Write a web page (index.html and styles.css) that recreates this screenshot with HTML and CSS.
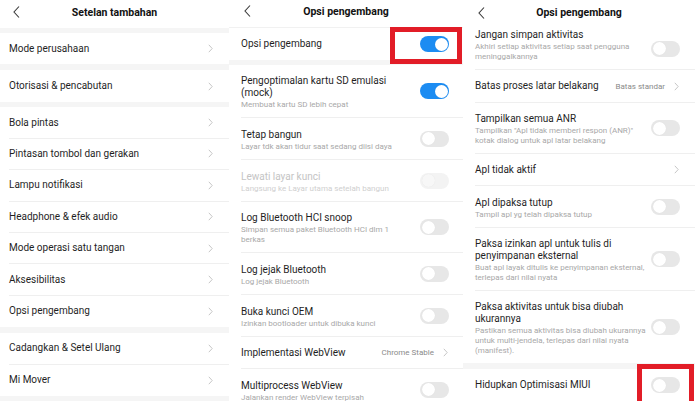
FILE: index.html
```html
<!DOCTYPE html>
<html lang="id">
<head>
<meta charset="utf-8">
<title>Opsi pengembang</title>
<link rel="stylesheet" href="styles.css">
</head>
<body>
<div class="screens">

  <section class="screen s1">
    <header class="bar">
      <svg class="back" viewBox="0 0 7 12"><polyline points="6,0.5 1,6 6,11.5"/></svg>
      <h1>Setelan tambahan</h1>
      <span></span>
    </header>
    <div class="band"></div>
    <div class="row plain last"><span class="label">Mode perusahaan</span><svg class="chev" viewBox="0 0 5 9"><polyline points="0.8,0.8 4.2,4.5 0.8,8.2"/></svg></div>
    <div class="band b6"></div>
    <div class="row plain last tall"><span class="label">Otorisasi &amp; pencabutan</span><svg class="chev" viewBox="0 0 5 9"><polyline points="0.8,0.8 4.2,4.5 0.8,8.2"/></svg></div>
    <div class="band"></div>
    <div class="row plain"><span class="label">Bola pintas</span><svg class="chev" viewBox="0 0 5 9"><polyline points="0.8,0.8 4.2,4.5 0.8,8.2"/></svg></div>
    <div class="row plain"><span class="label">Pintasan tombol dan gerakan</span><svg class="chev" viewBox="0 0 5 9"><polyline points="0.8,0.8 4.2,4.5 0.8,8.2"/></svg></div>
    <div class="row plain"><span class="label">Lampu notifikasi</span><svg class="chev" viewBox="0 0 5 9"><polyline points="0.8,0.8 4.2,4.5 0.8,8.2"/></svg></div>
    <div class="row plain"><span class="label">Headphone &amp; efek audio</span><svg class="chev" viewBox="0 0 5 9"><polyline points="0.8,0.8 4.2,4.5 0.8,8.2"/></svg></div>
    <div class="row plain"><span class="label">Mode operasi satu tangan</span><svg class="chev" viewBox="0 0 5 9"><polyline points="0.8,0.8 4.2,4.5 0.8,8.2"/></svg></div>
    <div class="row plain"><span class="label">Aksesibilitas</span><svg class="chev" viewBox="0 0 5 9"><polyline points="0.8,0.8 4.2,4.5 0.8,8.2"/></svg></div>
    <div class="row plain last"><span class="label">Opsi pengembang</span><svg class="chev" viewBox="0 0 5 9"><polyline points="0.8,0.8 4.2,4.5 0.8,8.2"/></svg></div>
    <div class="band b6"></div>
    <div class="row plain"><span class="label">Cadangkan &amp; Setel Ulang</span><svg class="chev" viewBox="0 0 5 9"><polyline points="0.8,0.8 4.2,4.5 0.8,8.2"/></svg></div>
    <div class="row plain last"><span class="label">Mi Mover</span><svg class="chev" viewBox="0 0 5 9"><polyline points="0.8,0.8 4.2,4.5 0.8,8.2"/></svg></div>
    <div class="band b6"></div>
  </section>

  <section class="screen s2">
    <header class="bar lined">
      <svg class="back" viewBox="0 0 7 12"><polyline points="6,0.5 1,6 6,11.5"/></svg>
      <h1>Opsi pengembang</h1>
      <span></span>
    </header>
    <div class="row plain last"><span class="label">Opsi pengembang</span><span class="toggle on"></span></div>
    <div class="band"></div>
    <div class="row"><div class="text"><span class="title">Pengoptimalan kartu SD emulasi<br>(mock)</span><span class="sub">Membuat kartu SD lebih cepat</span></div><span class="toggle on"></span></div>
    <div class="row"><div class="text"><span class="title">Tetap bangun</span><span class="sub">Layar tdk akan tidur saat sedang diisi daya</span></div><span class="toggle"></span></div>
    <div class="row disabled"><div class="text"><span class="title">Lewati layar kunci</span><span class="sub">Langsung ke Layar utama setelah bangun</span></div><span class="toggle"></span></div>
    <div class="row"><div class="text"><span class="title">Log Bluetooth HCI snoop</span><span class="sub">Simpan semua paket Bluetooth HCI dlm 1<br>berkas</span></div><span class="toggle"></span></div>
    <div class="row"><div class="text"><span class="title">Log jejak Bluetooth</span><span class="sub">Log jejak Bluetooth</span></div><span class="toggle"></span></div>
    <div class="row"><div class="text"><span class="title">Buka kunci OEM</span><span class="sub">Izinkan bootloader untuk dibuka kunci</span></div><span class="toggle"></span></div>
    <div class="row plain"><span class="label">Implementasi WebView</span><span class="value">Chrome Stable</span><svg class="chev" viewBox="0 0 5 9"><polyline points="0.8,0.8 4.2,4.5 0.8,8.2"/></svg></div>
    <div class="row"><div class="text"><span class="title">Multiprocess WebView</span><span class="sub">Jalankan render WebView terpisah</span></div><span class="toggle"></span></div>
    <div class="mark m2"></div>
  </section>

  <section class="screen s3">
    <header class="bar">
      <svg class="back" viewBox="0 0 7 12"><polyline points="6,0.5 1,6 6,11.5"/></svg>
      <h1>Opsi pengembang</h1>
      <span></span>
    </header>
    <div class="row cut"><div class="text"><span class="title">Jangan simpan aktivitas</span><span class="sub">Akhiri setiap aktivitas setiap saat pengguna<br>meninggalkannya</span></div><span class="toggle"></span></div>
    <div class="row plain wide"><span class="label">Batas proses latar belakang</span><span class="value">Batas standar</span><svg class="chev" viewBox="0 0 5 9"><polyline points="0.8,0.8 4.2,4.5 0.8,8.2"/></svg></div>
    <div class="row"><div class="text"><span class="title">Tampilkan semua ANR</span><span class="sub">Tampilkan "Apl tidak memberi respon (ANR)"<br>kotak dialog untuk apl latar belakang</span></div><span class="toggle"></span></div>
    <div class="row plain"><span class="label">Apl tidak aktif</span><svg class="chev" viewBox="0 0 5 9"><polyline points="0.8,0.8 4.2,4.5 0.8,8.2"/></svg></div>
    <div class="row"><div class="text"><span class="title">Apl dipaksa tutup</span><span class="sub">Tampil apl yg telah dipaksa tutup</span></div><span class="toggle"></span></div>
    <div class="row"><div class="text"><span class="title">Paksa izinkan apl untuk tulis di<br>penyimpanan eksternal</span><span class="sub">Buat apl layak ditulis ke penyimpanan eksternal,<br>terlepas dari nilai nyata</span></div><span class="toggle"></span></div>
    <div class="row last"><div class="text"><span class="title">Paksa aktivitas untuk bisa diubah<br>ukurannya</span><span class="sub">Pastikan semua aktivitas bisa diubah ukurannya<br>untuk multi-jendela, terlepas dari nilai nyata<br>(manifest).</span></div><span class="toggle"></span></div>
    <div class="band b6"></div>
    <div class="row plain last"><span class="label">Hidupkan Optimisasi MIUI</span><span class="toggle"></span></div>
    <div class="band b6"></div>
    <div class="mark m3"></div>
  </section>

</div>
</body>
</html>
```

FILE: styles.css
```css
* { box-sizing: border-box; }

html, body {
  margin: 0;
  padding: 0;
  background: #ffffff;
}

body {
  font-family: Roboto, "Liberation Sans", Arial, sans-serif;
  color: #1f1f1f;
  width: 695px;
  height: 401px;
  overflow: hidden;
}

.screens {
  display: flex;
  height: 401px;
}

.screen {
  position: relative;
  display: flex;
  flex-direction: column;
  background: #ffffff;
  overflow: hidden;
}

.s1 { width: 229px; }
.s2 { width: 234px; }
.s3 { width: 232px; }

/* header */
.bar {
  height: 28px;
  flex: none;
  display: grid;
  grid-template-columns: 1fr auto 1fr;
  align-items: center;
  background: #ffffff;
}

.bar.lined { border-bottom: 1px solid #f1f1f1; }

.bar h1 {
  margin: -3px 0 0;
  font-size: 10.5px;
  font-weight: 700;
  color: #111111;
  line-height: 14px;
}

.back {
  width: 7px;
  height: 12px;
  margin-left: 13px;
  margin-top: -4px;
  fill: none;
  stroke: #3a3a3a;
  stroke-width: 1.1;
}

.s2 .back { margin-left: 15px; margin-top: -6px; }
.s3 .back { margin-left: 15px; margin-top: -3px; }

/* separator bands */
.band {
  height: 5px;
  flex: none;
  background: #f5f5f5;
}
.band.b6 { height: 6px; }

/* rows */
.row {
  flex: none;
  display: flex;
  align-items: center;
  margin-left: 12px;
  padding-right: 14px;
  min-height: 42px;
  border-bottom: 1px solid #efefef;
}

.s1 .row { margin-left: 9px; padding-right: 15px; }
.s3 .row { padding-right: 15px; }

.row.last { border-bottom: none; }

.row.plain { min-height: 32px; height: 32px; }
.s1 .row.plain { height: 31.4px; min-height: 31.4px; }
.s1 .row.plain.tall { height: 32px; }
.s3 .row.plain.wide { height: 33px; }

.label {
  flex: 1;
  font-size: 10px;
  line-height: 12px;
  color: #1f1f1f;
  white-space: nowrap;
}

.text {
  flex: 1;
  display: flex;
  flex-direction: column;
  padding: 10px 0 7px;
}

.row.cut .text { padding-top: 1px; }
.row.cut { min-height: 41px; }

.title {
  font-size: 10px;
  line-height: 12px;
  color: #1f1f1f;
  white-space: nowrap;
}

.sub {
  margin-top: 1px;
  font-size: 8px;
  line-height: 10px;
  color: #a8a8a8;
  white-space: nowrap;
}

.row.disabled .title { color: #c4c4c4; }
.row.disabled .sub { color: #cfcfcf; }
.row.disabled .toggle { background: #f3f3f3; }
.row.disabled .toggle::after { background: #f7f7f7; }

.value {
  font-size: 8px;
  color: #8a8a8a;
  margin-right: 9px;
  white-space: nowrap;
}

.chev {
  flex: none;
  width: 5px;
  height: 9px;
  margin-right: 1px;
  fill: none;
  stroke: #c6c6c6;
  stroke-width: 1;
}

/* toggle switch */
.toggle {
  flex: none;
  position: relative;
  width: 29px;
  height: 16px;
  border-radius: 8px;
  background: #e7e7e7;
}

.toggle::after {
  content: "";
  position: absolute;
  top: 1.5px;
  left: 1.5px;
  width: 13px;
  height: 13px;
  border-radius: 50%;
  background: #ffffff;
  box-shadow: 0 0 1px rgba(0, 0, 0, 0.08);
}

.toggle.on { background: #1c8cf2; }
.toggle.on::after { left: auto; right: 1.5px; }

/* red highlight marks */
.mark {
  position: absolute;
  border: 5px solid #e21d27;
}

.m2 { left: 161px; top: 27px; width: 72px; height: 37px; }
.m3 { left: 174px; top: 364px; width: 57px; height: 42px; }
```
